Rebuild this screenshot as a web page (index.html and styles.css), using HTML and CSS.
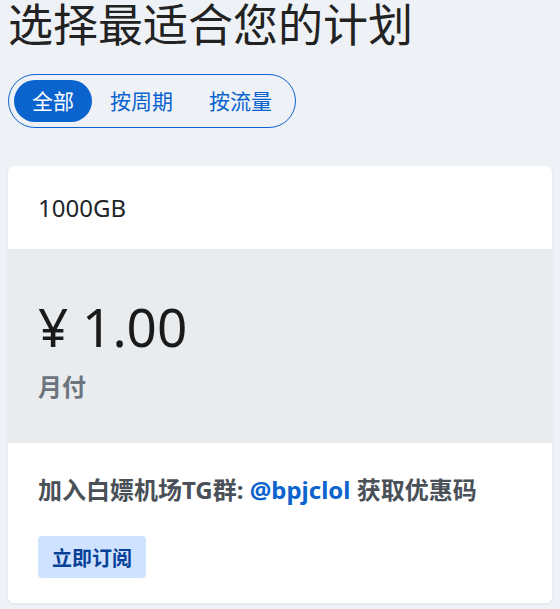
FILE: index.html
```html
<!DOCTYPE html>
<html lang="zh">
<head>
<meta charset="utf-8">
<link rel="stylesheet" href="styles.css">
</head>
<body>
<div class="page">
  <h1 class="title">选择最适合您的计划</h1>
  <div class="tabs">
    <span class="tab active">全部</span>
    <span class="tab">按周期</span>
    <span class="tab">按流量</span>
  </div>
  <div class="card">
    <div class="card-head">1000GB</div>
    <div class="card-price">
      <div class="price">¥ 1.00</div>
      <div class="period">月付</div>
    </div>
    <div class="card-foot">
      <p class="desc">加入白嫖机场TG群: <a class="link">@bpjclol</a> 获取优惠码</p>
      <button class="btn">立即订阅</button>
    </div>
  </div>
</div>
</body>
</html>
```
FILE: styles.css
```css
* { box-sizing: border-box; }
html, body { margin: 0; padding: 0; }
body {
  background: #eef2f7;
  font-family: "Noto Sans", "Noto Sans CJK SC", sans-serif;
  color: #212529;
  width: 560px;
  height: 609px;
  overflow: hidden;
}
.page { padding: 0 8px; }
.title {
  margin: 0;
  font-size: 45px;
  font-weight: 400;
  line-height: 50px;
  color: #222;
  white-space: nowrap;
}
.tabs {
  display: inline-flex;
  margin-top: 24px;
  padding: 5px 5px;
  border: 1px solid #0b63ce;
  border-radius: 27px;
}
.tab {
  font-size: 21px;
  line-height: 42px;
  padding: 0 18px;
  color: #0b63ce;
  border-radius: 21px;
}
.tab.active {
  background: #0b63ce;
  color: #fff;
}
.card {
  margin-top: 38px;
  background: #fff;
  border-radius: 6px;
  overflow: hidden;
  box-shadow: 0 1px 3px rgba(0,0,0,0.06);
}
.card-head {
  padding: 0 30px;
  height: 83px;
  display: flex;
  align-items: center;
  font-size: 24px;
}
.card-price {
  background: #e9ecef;
  height: 194px;
  padding: 42px 30px 0;
}
.price {
  font-size: 53px;
  line-height: 72px;
  color: #1a1a1a;
}
.period {
  margin-top: 5px;
  font-size: 24px;
  font-weight: 700;
  color: #6c757d;
}
.card-foot {
  padding: 23px 30px 25px;
}
.desc {
  margin: 0;
  font-size: 24px;
  font-weight: 700;
  color: #495057;
  line-height: 48px;
}
.link { color: #0b63ce; text-decoration: none; }
.btn {
  margin-top: 22px;
  font-family: inherit;
  font-size: 20px;
  font-weight: 700;
  color: #084298;
  background: #cfe2ff;
  border: 0;
  border-radius: 4px;
  height: 42px;
  padding: 0 14px;
  display: block;
}
```
